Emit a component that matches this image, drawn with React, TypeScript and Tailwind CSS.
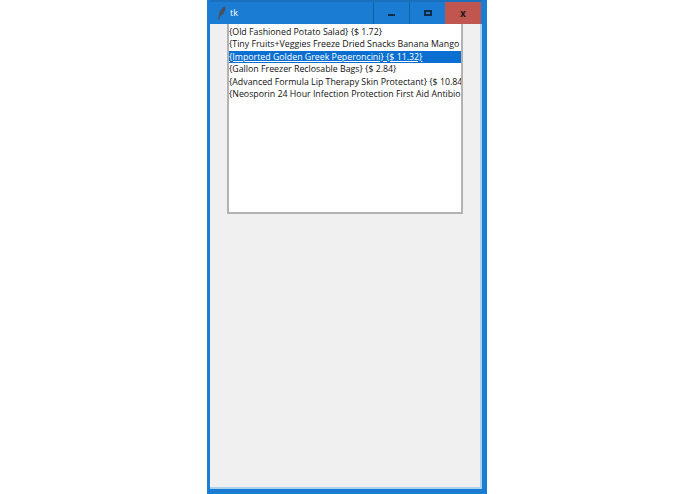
const items = [
  "{Old Fashioned Potato Salad} {$ 1.72}",
  "{Tiny Fruits+Veggies Freeze Dried Snacks Banana Mango",
  "{Imported Golden Greek Peperoncini} {$ 11.32}",
  "{Gallon Freezer Reclosable Bags} {$ 2.84}",
  "{Advanced Formula Lip Therapy Skin Protectant} {$ 10.84",
  "{Neosporin 24 Hour Infection Protection First Aid Antibio",
]

const App = () => {
  return (
    <div className="h-[494px] w-[695px] overflow-hidden bg-white pl-[207px] font-['Open_Sans',sans-serif]">
      <div className="flex h-[494px] w-[280px] flex-col border-b-[5px] border-l-[3px] border-r-[5px] border-[#1a7cd2]">
        <div className="flex h-[24px] shrink-0 items-stretch border-t-2 border-[#1a70bc] bg-[#1a7cd2]">
          <div className="flex flex-1 items-center pl-[7px]">
            <svg width="10" height="14" viewBox="0 0 10 14">
              <path d="M8.5 0.5C5.5 1 2.6 4 2.2 8L1 13.5L2.2 13.5L3.4 10C6.5 9 8.4 5 8.5 0.5Z" fill="#46525f" />
            </svg>
            <span className="ml-[3px] text-[9px] text-white">tk</span>
          </div>
          <div className="flex w-[36px] items-center justify-center border-l border-[#12629f]">
            <div className="mt-[3px] h-[2px] w-[7px] bg-[#0f2a44]" />
          </div>
          <div className="flex w-[36px] items-center justify-center border-l border-[#12629f]">
            <div className="mb-[1px] h-[6px] w-[8px] border-2 border-[#0f2a44]" />
          </div>
          <div className="flex w-[36px] items-center justify-center bg-[#c1564f]">
            <span className="mb-[1px] text-[10px] font-bold leading-none text-[#1f1a1a]">x</span>
          </div>
          <div className="w-[1px]" />
        </div>
        <div className="flex-1 border-b-2 border-r-2 border-[#a9d2f0] bg-[#f0f0f0] pl-[17px]">
          <div className="flex h-[190px] w-[236px] flex-col overflow-hidden border-2 border-t-0 border-[#b2b2b2] bg-white pt-[2px]">
            {items.map((item, i) => (
              <div
                key={item}
                className={`h-[12.4px] whitespace-nowrap text-[8.8px] leading-[12.4px] ${
                  i === 2 ? "bg-[#0a6fd0] text-white underline" : "text-[#111111]"
                }`}
              >
                {item}
              </div>
            ))}
          </div>
        </div>
      </div>
    </div>
  )
}

export default App
